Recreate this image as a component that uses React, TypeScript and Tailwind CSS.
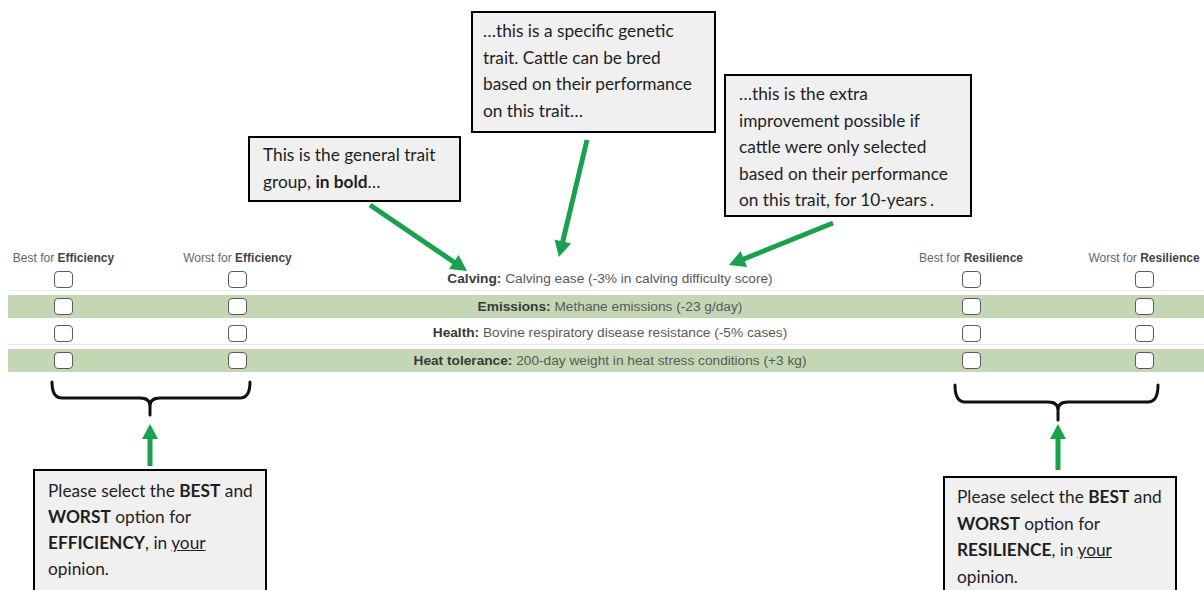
import React from "react";

type Row = { group: string; trait: string; shaded: boolean };

const rows: Row[] = [
  { group: "Calving:", trait: "Calving ease (-3% in calving difficulty score)", shaded: false },
  { group: "Emissions:", trait: "Methane emissions (-23 g/day)", shaded: true },
  { group: "Health:", trait: "Bovine respiratory disease resistance (-5% cases)", shaded: false },
  { group: "Heat tolerance:", trait: "200-day weight in heat stress conditions (+3 kg)", shaded: true },
];

const GREEN = "#19a24b";

// polygon for a thick arrow from (x1,y1) to tip (x2,y2)
function arrowPoints(x1: number, y1: number, x2: number, y2: number, shaft = 5, headLen = 16, headW = 17) {
  const dx = x2 - x1;
  const dy = y2 - y1;
  const len = Math.hypot(dx, dy);
  const ux = dx / len;
  const uy = dy / len;
  const nx = -uy;
  const ny = ux;
  const bx = x2 - ux * headLen;
  const by = y2 - uy * headLen;
  const pts = [
    [x1 + nx * shaft / 2, y1 + ny * shaft / 2],
    [bx + nx * shaft / 2, by + ny * shaft / 2],
    [bx + nx * headW / 2, by + ny * headW / 2],
    [x2, y2],
    [bx - nx * headW / 2, by - ny * headW / 2],
    [bx - nx * shaft / 2, by - ny * shaft / 2],
    [x1 - nx * shaft / 2, y1 - ny * shaft / 2],
  ];
  return pts.map((p) => p.map((v) => v.toFixed(1)).join(",")).join(" ");
}

function Checkbox() {
  return <span className="inline-block h-[17px] w-[19px] rounded-[4px] border border-[#5a5a5a] bg-white" />;
}

function ColHead({ kind, what }: { kind: string; what: string }) {
  return (
    <div className="text-center text-[12px] leading-[14px] text-[#666] whitespace-nowrap">
      {kind} for <b className="text-[#444]">{what}</b>
    </div>
  );
}

function Callout({ className, children }: { className: string; children: React.ReactNode }) {
  return (
    <div
      className={
        "absolute border-2 border-black bg-[#f0f0f0] text-[#1f1f1f] text-[17.3px] leading-[26.5px] " + className
      }
      style={{ fontFamily: "Lato, 'Open Sans', sans-serif" }}
    >
      {children}
    </div>
  );
}

const grid = "grid grid-cols-[111px_237px_508px_214px_132px]";

export default function App() {
  return (
    <div
      className="relative h-[590px] w-[1204px] overflow-hidden bg-white"
      style={{ fontFamily: "'Liberation Sans', Arial, sans-serif" }}
    >
      {/* top annotations */}
      <div className="relative h-[251px]">
        <Callout className="left-[248px] top-[136px] h-[66px] w-[213px] pl-[13px] pt-[4px]">
          This is the general trait
          <br />
          group, <b>in bold</b>…
        </Callout>
        <Callout className="left-[471px] top-[11px] h-[122px] w-[245px] pl-[10px] pt-[5px]">
          …this is a specific genetic
          <br />
          trait. Cattle can be bred
          <br />
          based on their performance
          <br />
          on this trait…
        </Callout>
        <Callout className="left-[724px] top-[74px] h-[143px] w-[248px] pl-[13px] pt-[5px]">
          …this is the extra
          <br />
          improvement possible if
          <br />
          cattle were only selected
          <br />
          based on their performance
          <br />
          on this trait, for 10-years<span className="ml-[3px]">.</span>
        </Callout>
      </div>

      {/* survey table */}
      <div className="ml-[8px] w-[1202px]">
        <div className={grid + " h-[15px]"}>
          <ColHead kind="Best" what="Efficiency" />
          <ColHead kind="Worst" what="Efficiency" />
          <div />
          <ColHead kind="Best" what="Resilience" />
          <ColHead kind="Worst" what="Resilience" />
        </div>
        {rows.map((r) => (
          <div key={r.group} className="py-[2px]">
            <div
              className={
                grid +
                " h-[23px] items-center " +
                (r.shaded ? "bg-[#c4d7b4]" : "bg-white border-b border-[#ececec]")
              }
            >
              <div className="flex justify-center">
                <Checkbox />
              </div>
              <div className="flex justify-center">
                <Checkbox />
              </div>
              <div className="whitespace-nowrap text-center text-[13.7px] leading-[16px] text-[#595959]">
                <b className="text-[#3a3a3a]">{r.group}</b> {r.trait}
              </div>
              <div className="flex justify-center">
                <Checkbox />
              </div>
              <div className="flex justify-center">
                <Checkbox />
              </div>
            </div>
          </div>
        ))}
      </div>

      {/* bottom instruction boxes */}
      <div className="mt-[95px] flex items-start justify-between pl-[33px] pr-[27px]">
        <div
          className="h-[125px] w-[234px] border-2 border-black bg-[#f0f0f0] pl-[13px] pt-[7px] text-[17.3px] leading-[26px] text-[#1f1f1f]"
          style={{ fontFamily: "Lato, 'Open Sans', sans-serif" }}
        >
          Please select the <b>BEST</b> and
          <br />
          <b>WORST</b> option for
          <br />
          <b>EFFICIENCY</b>, in <u>your</u>
          <br />
          opinion.
        </div>
        <div
          className="mt-[7px] h-[130px] w-[234px] border-2 border-black bg-[#f0f0f0] pl-[12px] pt-[6px] text-[17.3px] leading-[26.5px] text-[#1f1f1f]"
          style={{ fontFamily: "Lato, 'Open Sans', sans-serif" }}
        >
          Please select the <b>BEST</b> and
          <br />
          <b>WORST</b> option for
          <br />
          <b>RESILIENCE</b>, in <u>your</u>
          <br />
          opinion.
        </div>
      </div>

      {/* arrows and braces drawn over the page */}
      <svg className="pointer-events-none absolute inset-0" width="1204" height="590" viewBox="0 0 1204 590">
        <g fill={GREEN}>
          <polygon points={arrowPoints(370, 205, 467, 271)} />
          <polygon points={arrowPoints(587, 140, 559, 257)} />
          <polygon points={arrowPoints(833, 223, 729, 265)} />
          <polygon points={arrowPoints(150, 466, 150, 424, 5, 15, 16)} />
          <polygon points={arrowPoints(1058, 470, 1058, 424, 5, 15, 16)} />
        </g>
        <g fill="none" stroke="#111" strokeWidth="3" strokeLinecap="round">
          <path d="M52 382 Q52 398 62 398 L140 398 Q150 398 150 406 L150 415 M150 406 Q150 398 160 398 L240 398 Q250 398 250 382" />
          <path d="M955 385 Q955 402 965 402 L1048 402 Q1058 402 1058 410 L1058 420 M1058 410 Q1058 402 1068 402 L1148 402 Q1158 402 1158 385" />
        </g>
      </svg>
    </div>
  );
}
